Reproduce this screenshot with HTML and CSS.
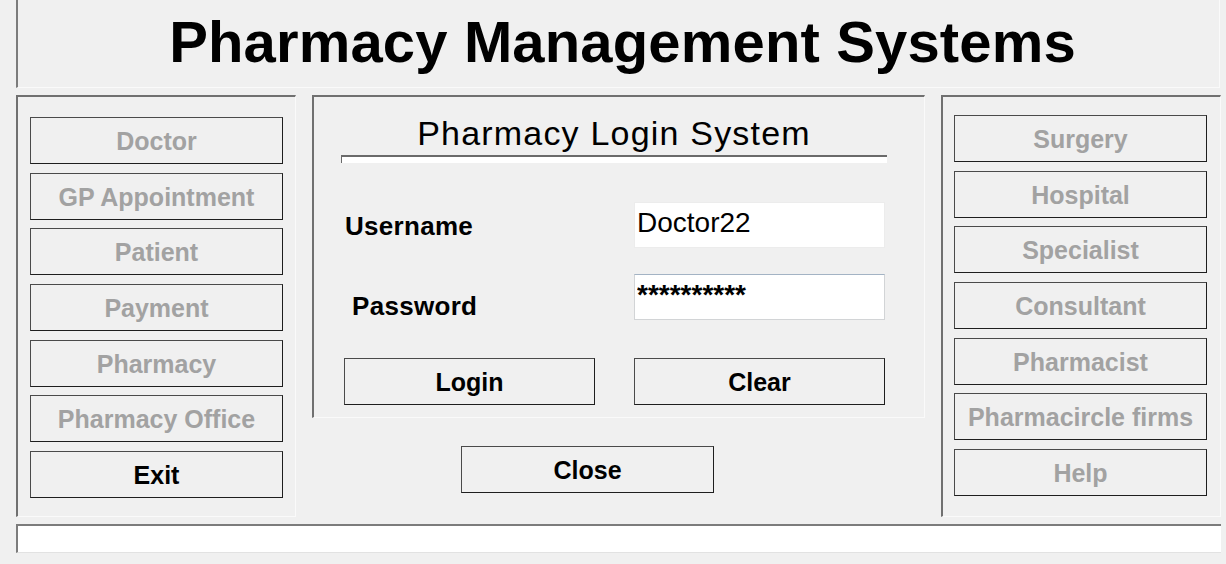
FILE: index.html
```html
<!DOCTYPE html>
<html lang="en">
<head>
  <meta charset="UTF-8">
  <meta name="viewport" content="width=device-width, initial-scale=1.0">
  <title>Pharmacy Management Systems</title>
  <link rel="stylesheet" href="styles.css">
</head>
<body>
  <div class="header">
    <h1>Pharmacy Management Systems</h1>
  </div>

  <div class="main">
    <div class="side side-left">
      <button class="nav" disabled>Doctor</button>
      <button class="nav" disabled>GP Appointment</button>
      <button class="nav" disabled>Patient</button>
      <button class="nav" disabled>Payment</button>
      <button class="nav" disabled>Pharmacy</button>
      <button class="nav" disabled>Pharmacy Office</button>
      <button class="nav">Exit</button>
    </div>

    <div class="middle">
      <div class="login">
        <h2>Pharmacy Login System</h2>
        <div class="rule"></div>
        <div class="form">
          <label class="lbl lbl-user" for="username">Username</label>
          <input type="text" id="username" class="field field-user" value="Doctor22">
          <label class="lbl lbl-pass" for="password">Password</label>
          <input type="text" id="password" class="field field-pass" value="**********">
          <button class="act act-login">Login</button>
          <button class="act act-clear">Clear</button>
        </div>
      </div>
      <button class="act act-close">Close</button>
    </div>

    <div class="side side-right">
      <button class="nav" disabled>Surgery</button>
      <button class="nav" disabled>Hospital</button>
      <button class="nav" disabled>Specialist</button>
      <button class="nav" disabled>Consultant</button>
      <button class="nav" disabled>Pharmacist</button>
      <button class="nav" disabled>Pharmacircle firms</button>
      <button class="nav" disabled>Help</button>
    </div>
  </div>

  <div class="status"></div>
</body>
</html>
```

FILE: styles.css
```css
body {
  margin: 0;
  background: #f0f0f0;
  font-family: "Liberation Sans", Arial, sans-serif;
  color: #000;
}
.header {
  margin-left: 16px;
  width: 1204px;
  height: 88px;
  box-sizing: border-box;
  border-left: 2px solid #7c7c7c;
  border-right: 1px solid #fafafa;
  border-bottom: 1px solid #fafafa;
  padding: 12px 0 0 8px;
}
.header h1 {
  margin: 0;
  font-size: 58px;
  line-height: 60px;
  font-weight: bold;
  letter-spacing: 0.15px;
  text-align: center;
}
.main {
  display: flex;
  gap: 16px;
  margin: 7px 0 0 16px;
}
.side {
  width: 280px;
  height: 422px;
  box-sizing: border-box;
  border-top: 2px solid #707070;
  border-left: 2px solid #707070;
  border-right: 1px solid #fafafa;
  border-bottom: 1px solid #fafafa;
  display: flex;
  flex-direction: column;
  gap: 8.67px;
}
.side-left {
  padding: 20px 0 0 12px;
}
.side-right {
  padding: 18px 0 0 11px;
}
button {
  font-family: "Liberation Sans", Arial, sans-serif;
  font-weight: bold;
  font-size: 25px;
  background: #f0f0f0;
  color: #000;
  border: 1px solid #1e1e1e;
  border-top-color: #4a4a4a;
  border-left-color: #4a4a4a;
  padding: 2px 0 0;
  box-sizing: border-box;
  cursor: pointer;
}
.nav {
  width: 253px;
  height: 47px;
  flex: none;
}
.nav:disabled {
  color: #a2a2a2;
  cursor: default;
}
.middle {
  width: 613px;
}
.login {
  box-sizing: border-box;
  height: 323px;
  border-top: 2px solid #707070;
  border-left: 2px solid #707070;
  border-right: 1px solid #fafafa;
  border-bottom: 1px solid #fafafa;
  padding-top: 18px;
}
.login h2 {
  margin: 0;
  font-size: 34px;
  line-height: 36px;
  font-weight: normal;
  letter-spacing: 1.2px;
  text-align: center;
  padding-right: 10px;
}
.rule {
  margin: 4px 0 0 27px;
  width: 545px;
  height: 6px;
  background: #fff;
  border-top: 2px solid #6a6a6a;
  border-left: 1px solid #6a6a6a;
}
.form {
  display: grid;
  grid-template-columns: 251px 251px;
  column-gap: 39px;
  padding-left: 30px;
  margin-top: 39px;
}
.lbl {
  font-size: 26px;
  line-height: 30px;
  font-weight: bold;
  letter-spacing: 0.3px;
}
.lbl-user {
  margin: 9px 0 0 1px;
}
.lbl-pass {
  margin: 43px 0 0 8px;
}
.field {
  width: 251px;
  height: 46px;
  box-sizing: border-box;
  background: #fff;
  font-family: "Liberation Sans", Arial, sans-serif;
  font-size: 28px;
  line-height: 32px;
  padding: 4px 2px 8px;
  outline: none;
  color: #000;
}
.field-user {
  border: 1px solid #ececec;
}
.field-pass {
  margin-top: 26px;
  font-weight: bold;
  border: 1px solid #d2d4d6;
  border-top-color: #a3b3c4;
}
.act {
  width: 251px;
  height: 47px;
}
.act-login,
.act-clear {
  margin-top: 37px;
}
.act-close {
  width: 253px;
  margin: 28px 0 0 149px;
}
.status {
  margin: 7px 0 0 16px;
  width: 1205px;
  height: 29px;
  box-sizing: border-box;
  background: #fff;
  border-top: 2px solid #7c7c7c;
  border-left: 2px solid #7c7c7c;
  border-bottom: 1px solid #e2e2e2;
}
```
